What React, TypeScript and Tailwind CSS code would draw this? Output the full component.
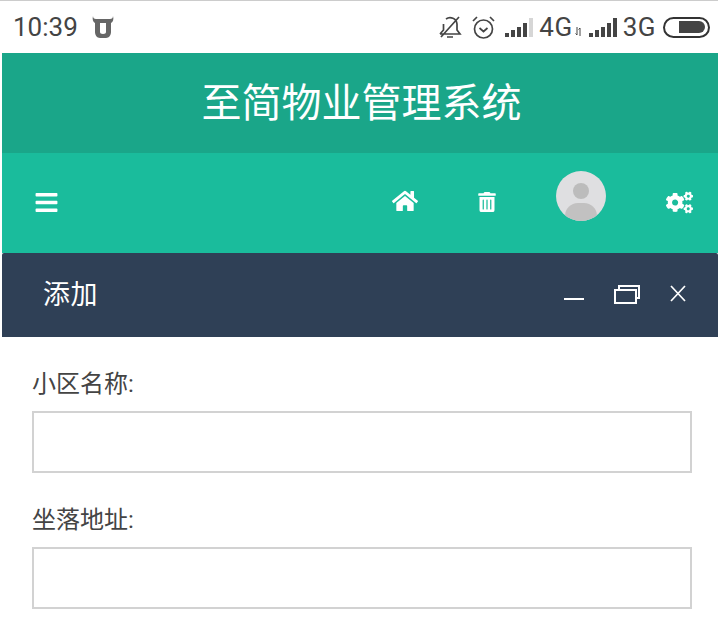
import { FaBars, FaCogs, FaHome, FaTrashAlt } from 'react-icons/fa';

const cjk = "font-['Roboto','Noto_Sans_CJK_SC',sans-serif]";

function SignalBars({ dimLast }: { dimLast?: boolean }) {
  const heights = [4, 7, 10, 14, 19];
  return (
    <div className="flex items-end gap-[2px]">
      {heights.map((h, i) => (
        <div
          key={h}
          className={i === 4 && dimLast ? 'w-[4px] bg-[#d6d6d6]' : 'w-[4px] bg-[#444]'}
          style={{ height: h }}
        />
      ))}
    </div>
  );
}

function StatusBar() {
  return (
    <div className="flex h-[52px] items-center justify-between pl-[13px] pr-[8px] text-[#444]">
      <div className="flex items-center gap-[13px]">
        <span className="text-[26px] leading-none">10:39</span>
        <svg width="24" height="22" viewBox="0 0 22 22" fill="#666">
          <path d="M1 0c0 2 1 3 3 3h14c2 0 3-1 3-3 1 3 0 6-2 7v9c0 3-2 6-5 6H8c-3 0-5-3-5-6V7C1 6 0 3 1 0z" />
          <path d="M8 7h6v9c0 1-1 2-3 2s-3-1-3-2z" fill="#fff" />
        </svg>
      </div>
      <div className="flex items-center">
        <svg width="24" height="24" viewBox="0 0 24 24" fill="none" stroke="#444" strokeWidth="1.7" className="mr-[9px]">
          <path d="M2 19h20l-3-4v-6a7 7 0 0 0-11-5M5.500 9v6L2 19M9 22h6M3 22 21 2" />
        </svg>
        <svg width="25" height="25" viewBox="0 0 25 25" fill="none" stroke="#444" strokeWidth="1.7" className="mr-[9px]">
          <circle cx="12.500" cy="14" r="9" />
          <path d="M8.500 13l4 3.500 4-3.500M2 6l4-4M23 6l-4-4" />
        </svg>
        <SignalBars dimLast />
        <span className="ml-[6px] text-[26px] leading-none tracking-[0.5px]">4G</span>
        <svg width="7" height="9" viewBox="0 0 7 9" fill="none" stroke="#444" strokeWidth="1" className="ml-[2px] mr-[7px] mt-[8px]">
          <path d="M2 0v8M0.500 6.500 2 8M5 9V1M3.500 2.500 5 1" />
        </svg>
        <SignalBars />
        <span className="ml-[6px] text-[26px] leading-none tracking-[0.5px]">3G</span>
        <div className="ml-[7px] flex h-[21px] w-[47px] items-center justify-end rounded-full border-[2.5px] border-[#333] pr-[3px]">
          <div className="h-[12px] w-[26px] rounded-r-full rounded-l-[2px] bg-[#444]" />
        </div>
      </div>
    </div>
  );
}

function NavBar() {
  return (
    <div className="flex h-[100px] items-center bg-[#1abc9c] text-white">
      <FaBars className="ml-[32px] mt-[-2px] text-[25px]" />
      <FaHome className="ml-[333px] mt-[-4px] text-[26px]" />
      <FaTrashAlt className="ml-[59px] mt-[-2px] text-[20px]" />
      <div className="relative ml-[59px] mt-[-14px] h-[50px] w-[50px] overflow-hidden rounded-full bg-[#dfdfe1]">
        <div className="absolute left-[17px] top-[12px] h-[16px] w-[16px] rounded-full bg-[#bcbcbc]" />
        <div className="absolute left-[9px] top-[32px] h-[26px] w-[32px] rounded-full bg-[#c2c1c1]" />
      </div>
      <FaCogs className="ml-[60px] mt-[-2px] text-[27px]" />
    </div>
  );
}

function DialogTitle() {
  return (
    <div className="flex h-[84px] items-center rounded-t-[2px] bg-[#2f4056] text-white">
      <span className="ml-[41px] text-[27px] leading-none tracking-[0.5px]">添加</span>
      <svg width="140" height="30" viewBox="0 0 140 30" fill="none" stroke="#fff" strokeWidth="2" className="ml-auto mr-[20px]">
        <path d="M6 19h20M57 10h21v13H57zM61 10V6h20v12h-3" />
        <path d="M113 6l14 15M127 6l-14 15" strokeWidth="1.700" />
      </svg>
    </div>
  );
}

function Field({ label }: { label: string }) {
  return (
    <div>
      <label className="block text-[24px] leading-[34px] text-[#444]">{label}</label>
      <input className="mt-[10px] block h-[62px] w-full border-2 border-[#d2d2d2] bg-white" />
    </div>
  );
}

export default function App() {
  return (
    <div className={`h-[622px] w-[718px] overflow-hidden border-t border-[#cccccc] bg-white ${cjk}`}>
      <StatusBar />
      <div className="ml-[2px]">
        <div className="flex h-[100px] items-center justify-center bg-[#1aa689] pl-[3px] pt-[2px] text-[40px] leading-none text-white">
          至简物业管理系统
        </div>
        <NavBar />
        <DialogTitle />
      </div>
      <div className="flex flex-col gap-[30px] pl-[32px] pr-[26px] pt-[30px]">
        <Field label="小区名称:" />
        <Field label="坐落地址:" />
      </div>
    </div>
  );
}
